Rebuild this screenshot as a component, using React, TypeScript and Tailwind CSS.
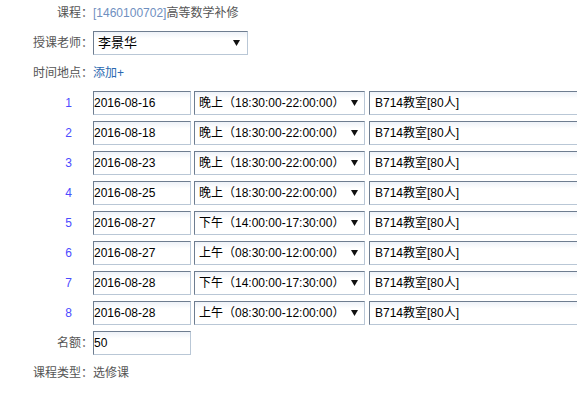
const rows = [
  { date: "2016-08-16", time: "晚上（18:30:00-22:00:00）" },
  { date: "2016-08-18", time: "晚上（18:30:00-22:00:00）" },
  { date: "2016-08-23", time: "晚上（18:30:00-22:00:00）" },
  { date: "2016-08-25", time: "晚上（18:30:00-22:00:00）" },
  { date: "2016-08-27", time: "下午（14:00:00-17:30:00）" },
  { date: "2016-08-27", time: "上午（08:30:00-12:00:00）" },
  { date: "2016-08-28", time: "下午（14:00:00-17:30:00）" },
  { date: "2016-08-28", time: "上午（08:30:00-12:00:00）" },
];

const box =
  "h-[24px] shrink-0 whitespace-nowrap flex items-center border border-t-[#6e7d90] border-l-[#6e7d90] border-b-[#b9c7d6] border-r-[#b9c7d6] bg-gradient-to-b from-[#eef2f8] to-white to-[30%] text-[12px] text-black";

function Arrow() {
  return (
    <svg width="7" height="6" viewBox="0 0 7 6" className="shrink-0">
      <polygon points="0,0 7,0 3.5,6" fill="#111" />
    </svg>
  );
}

function Label({ children }: { children: React.ReactNode }) {
  return <div className="w-[93px] shrink-0 text-right text-[#555]">{children}</div>;
}

export default function App() {
  return (
    <div className="w-[577px] h-[393px] overflow-hidden bg-white font-['Liberation_Sans','Noto_Sans_CJK_SC',sans-serif] text-[12px]">
      <div className="h-[30px] flex items-center -mt-[2px]">
        <Label>课程：</Label>
        <span className="text-[#6f8fbf]">[1460100702]</span>
        <span className="text-[#555]">高等数学补修</span>
      </div>

      <div className="h-[30px] flex items-center">
        <Label>授课老师：</Label>
        <div className={`${box} w-[155px] h-[22px] justify-between pl-[4px] pr-[7px] text-[13px]`}>
          <span>李景华</span>
          <Arrow />
        </div>
      </div>

      <div className="h-[30px] flex items-center">
        <Label>时间地点：</Label>
        <span className="text-[#2a68b0]">添加+</span>
      </div>

      {rows.map((r, i) => (
        <div key={i} className="h-[30px] flex items-center">
          <div className="w-[93px] shrink-0 text-right pr-[21px] text-[#4b4bff]">{i + 1}</div>
          <div className={`${box} w-[98px]`}>{r.date}</div>
          <div className={`${box} w-[171px] ml-[3px] justify-between pl-[4px] pr-[6px]`}>
            <span>{r.time}</span>
            <Arrow />
          </div>
          <div className={`${box} w-[230px] ml-[4px] pl-[5px]`}>B714教室[80人]</div>
        </div>
      ))}

      <div className="h-[30px] flex items-center">
        <Label>名额：</Label>
        <div className={`${box} w-[98px] h-[23px]`}>50</div>
      </div>

      <div className="h-[30px] flex items-center">
        <Label>课程类型：</Label>
        <span className="text-[#555]">选修课</span>
      </div>
    </div>
  );
}
